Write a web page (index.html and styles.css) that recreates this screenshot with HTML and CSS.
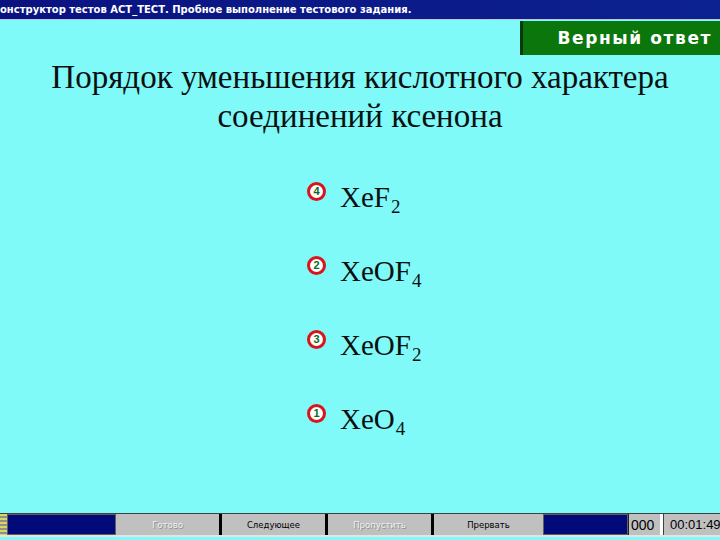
FILE: index.html
```html
<!DOCTYPE html>
<html lang="ru">
<head>
    <meta charset="UTF-8">
    <title>АСТ_ТЕСТ</title>
    <link rel="stylesheet" href="styles.css">
</head>
<body>
    <div class="window">
        <!-- Title bar -->
        <div class="title-bar">онструктор тестов АСТ_ТЕСТ. Пробное выполнение тестового задания.</div>

        <div class="result-row">
            <div class="result">Верный ответ</div>
        </div>

        <h1 class="question">Порядок уменьшения кислотного характера<br>соединений ксенона</h1>

        <!-- Answers -->
        <div class="answers">
            <div class="answer">
                <span class="num">4</span>
                <span class="formula">XeF<sub>2</sub></span>
            </div>
            <div class="answer">
                <span class="num">2</span>
                <span class="formula">XeOF<sub>4</sub></span>
            </div>
            <div class="answer">
                <span class="num">3</span>
                <span class="formula">XeOF<sub>2</sub></span>
            </div>
            <div class="answer">
                <span class="num">1</span>
                <span class="formula">XeO<sub>4</sub></span>
            </div>
        </div>

        <!-- Status bar -->
        <div class="status-bar">
            <div class="status-icon"></div>
            <div class="status-fill wide"></div>
            <div class="btn disabled">Готово</div>
            <div class="btn">Следующее</div>
            <div class="btn disabled">Пропустить</div>
            <div class="btn last">Прервать</div>
            <div class="status-fill"></div>
            <div class="counter">000</div>
            <div class="timer">00:01:49</div>
        </div>
    </div>
</body>
</html>
```

FILE: styles.css
```css
/* General */
body {
    margin: 0;
    background: #80f9f9;
    font-family: "Liberation Serif", serif;
    color: #000;
}

.window {
    width: 720px;
    height: 540px;
    display: flex;
    flex-direction: column;
    overflow: hidden;
}

/* Title bar */
.title-bar {
    height: 19px;
    line-height: 19px;
    background: linear-gradient(to right, #0a1280, #0c2290);
    border-bottom: 1px solid #b8c4e8;
    color: #fff;
    font-family: "DejaVu Sans", sans-serif;
    font-size: 10px;
    font-weight: bold;
    white-space: nowrap;
}

/* Verdict */
.result-row {
    display: flex;
    justify-content: flex-end;
    margin-top: 1px;
}
.result {
    width: 200px;
    height: 34px;
    line-height: 34px;
    background: #0b760b;
    border-left: 3px solid #0a3a0a;
    color: #fff;
    font-family: "DejaVu Sans", sans-serif;
    font-size: 17px;
    font-weight: bold;
    letter-spacing: 1.6px;
    text-align: right;
    padding-right: 8px;
    box-sizing: border-box;
}

/* Question */
.question {
    margin: 3px 0 0;
    text-align: center;
    font-size: 33px;
    font-weight: normal;
    line-height: 39px;
    color: #0a1010;
}

/* Answers */
.answers {
    display: flex;
    flex-direction: column;
    gap: 42px;
    padding-left: 307px;
    margin-top: 45px;
}
.answer {
    display: flex;
    align-items: flex-start;
    gap: 14px;
    height: 32px;
}
.num {
    width: 13px;
    height: 13px;
    margin-top: 1px;
    border: 3px solid #d8141c;
    border-radius: 50%;
    background: #fff;
    color: #0a6a20;
    font-family: "Liberation Sans", sans-serif;
    font-size: 11px;
    font-weight: bold;
    line-height: 13px;
    text-align: center;
}
.formula {
    font-size: 29px;
    line-height: 32px;
    color: #0a1010;
}
.formula sub {
    font-size: 19px;
    line-height: 1;
    vertical-align: -6px;
    margin-left: 1px;
}

/* Status bar */
.status-bar {
    margin-top: auto;
    margin-bottom: 3px;
    height: 21px;
    display: flex;
    background: #c0c0c0;
    border-top: 1px solid #404040;
    border-bottom: 2px solid #e4e4e4;
    font-family: "DejaVu Sans", sans-serif;
    font-size: 8.5px;
}
.status-icon {
    width: 7px;
    background: repeating-linear-gradient(#d8d860 0 2px, #909090 2px 4px);
}
.status-fill {
    width: 83px;
    background: #000a78;
    border: 1px solid #606060;
}
.status-fill.wide {
    width: 107px;
}
.btn {
    width: 103px;
    display: flex;
    align-items: center;
    justify-content: center;
    border-right: 3px solid #000;
    color: #000;
}
.btn.disabled {
    color: #f0f0f0;
    text-shadow: 1px 1px 0 #909090;
}
.btn.last {
    width: 109px;
    border-right: none;
}
.counter {
    width: 29px;
    border-left: 1px solid #202020;
    border-right: 3px solid #fff;
    font-family: "Liberation Sans", sans-serif;
    font-size: 14px;
    display: flex;
    align-items: center;
    padding-left: 2px;
}
.timer {
    flex: 1;
    border-left: 1px solid #404040;
    font-family: "Liberation Sans", sans-serif;
    font-size: 13px;
    display: flex;
    align-items: center;
    padding-left: 6px;
    white-space: nowrap;
    overflow: hidden;
}
```
